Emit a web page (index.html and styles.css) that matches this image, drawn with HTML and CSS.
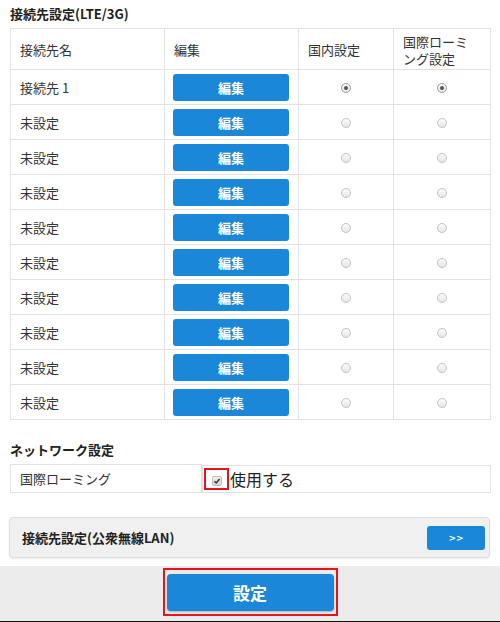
FILE: index.html
```html
<!DOCTYPE html>
<html lang="ja">
<head>
<meta charset="utf-8">
<link rel="stylesheet" href="styles.css">
</head>
<body>
<div class="page">
  <h2 class="title">接続先設定(LTE/3G)</h2>
  <table class="apn">
    <colgroup>
      <col class="c1"><col class="c2"><col class="c3"><col class="c4">
    </colgroup>
    <tr class="head">
      <td>接続先名</td><td>編集</td><td>国内設定</td><td>国際ローミング設定</td>
    </tr>
    <tr><td>接続先 1</td><td class="bc"><button class="edit">編集</button></td><td class="rc"><span class="radio on"></span></td><td class="rc"><span class="radio on"></span></td></tr>
    <tr><td>未設定</td><td class="bc"><button class="edit">編集</button></td><td class="rc"><span class="radio"></span></td><td class="rc"><span class="radio"></span></td></tr>
    <tr><td>未設定</td><td class="bc"><button class="edit">編集</button></td><td class="rc"><span class="radio"></span></td><td class="rc"><span class="radio"></span></td></tr>
    <tr><td>未設定</td><td class="bc"><button class="edit">編集</button></td><td class="rc"><span class="radio"></span></td><td class="rc"><span class="radio"></span></td></tr>
    <tr><td>未設定</td><td class="bc"><button class="edit">編集</button></td><td class="rc"><span class="radio"></span></td><td class="rc"><span class="radio"></span></td></tr>
    <tr><td>未設定</td><td class="bc"><button class="edit">編集</button></td><td class="rc"><span class="radio"></span></td><td class="rc"><span class="radio"></span></td></tr>
    <tr><td>未設定</td><td class="bc"><button class="edit">編集</button></td><td class="rc"><span class="radio"></span></td><td class="rc"><span class="radio"></span></td></tr>
    <tr><td>未設定</td><td class="bc"><button class="edit">編集</button></td><td class="rc"><span class="radio"></span></td><td class="rc"><span class="radio"></span></td></tr>
    <tr><td>未設定</td><td class="bc"><button class="edit">編集</button></td><td class="rc"><span class="radio"></span></td><td class="rc"><span class="radio"></span></td></tr>
    <tr><td>未設定</td><td class="bc"><button class="edit">編集</button></td><td class="rc"><span class="radio"></span></td><td class="rc"><span class="radio"></span></td></tr>
  </table>

  <h2 class="title net-title">ネットワーク設定</h2>
  <table class="net">
    <colgroup><col class="n1"><col class="n2"></colgroup>
    <tr>
      <td>国際ローミング</td>
      <td class="chk-cell"><span class="hl"><span class="check"><svg viewBox="0 0 10 10" width="8" height="8"><path d="M1.8 5.2 L4 7.4 L8.2 2.4" fill="none" stroke="#333" stroke-width="1.8"/></svg></span></span><span class="use">使用する</span></td>
    </tr>
  </table>

  <div class="panel">
    <span class="panel-label">接続先設定(公衆無線LAN)</span>
    <button class="go">&gt;&gt;</button>
  </div>
</div>
<div class="footer">
  <div class="hl-box"><button class="submit">設定</button></div>
</div>
</body>
</html>
```

FILE: styles.css
```css
html, body {
  margin: 0;
  padding: 0;
  background: #fff;
  font-family: "Noto Sans CJK JP", "Noto Sans", sans-serif;
  color: #333;
}
.page {
  padding: 0 10px;
}
.title {
  margin: 0;
  padding-top: 6px;
  height: 22px;
  font-size: 13px;
  line-height: 16px;
  font-weight: bold;
  color: #222;
}
.apn {
  border-collapse: collapse;
  table-layout: fixed;
  width: 480px;
  font-size: 13px;
}
.c1 { width: 154px; }
.c2 { width: 134px; }
.c3 { width: 95px; }
.c4 { width: 97px; }
.apn td {
  border: 1px solid #e2e2e2;
  height: 34px;
  padding: 0 0 0 9px;
  line-height: 17px;
  vertical-align: middle;
}
.apn .head td {
  height: 39px;
  padding-top: 1px;
  padding-right: 15px;
}
.apn td.bc {
  padding: 0 8px;
}
.apn td.rc {
  padding: 0;
  text-align: center;
}
.edit {
  display: block;
  width: 116px;
  height: 27px;
  margin: 0;
  border: none;
  border-radius: 3px;
  background: #1a87d9;
  color: #fff;
  font-family: inherit;
  font-size: 13px;
  font-weight: bold;
  padding: 0;
}
.radio {
  display: inline-block;
  width: 10px;
  height: 10px;
  box-sizing: border-box;
  border-radius: 50%;
  border: 1px solid #c4c4c4;
  background: linear-gradient(#fbfbfb, #e6e6e6);
  position: relative;
  vertical-align: middle;
  top: -1px;
}
.radio.on {
  border-color: #9a9a9a;
}
.radio.on::after {
  content: "";
  position: absolute;
  left: 2px;
  top: 2px;
  width: 4px;
  height: 4px;
  border-radius: 50%;
  background: #555;
}
.net-title {
  margin-top: 16px;
  padding-top: 6px;
  height: 22px;
}
.net {
  border-collapse: collapse;
  table-layout: fixed;
  width: 480px;
  font-size: 13px;
}
.n1 { width: 191px; }
.n2 { width: 289px; }
.net td {
  border: 1px solid #e2e2e2;
  height: 26px;
  padding: 0 0 0 9px;
  vertical-align: middle;
}
.net td.chk-cell {
  padding: 0;
}
.chk-cell {
  display: flex;
  align-items: center;
}
.hl {
  display: inline-flex;
  align-items: center;
  justify-content: center;
  box-sizing: border-box;
  width: 25px;
  height: 22px;
  margin-left: 1px;
  border: 2px solid #e8141b;
  padding-top: 4px;
}
.check {
  display: inline-flex;
  align-items: center;
  justify-content: center;
  width: 10px;
  height: 10px;
  box-sizing: border-box;
  border: 1px solid #bdbdbd;
  border-radius: 2px;
  background: linear-gradient(#f0f0f0, #d8d8d8);
}
.use {
  font-size: 16px;
  line-height: 20px;
  color: #222;
  margin-left: 1px;
}
.panel {
  margin-top: 24px;
  margin-left: -1px;
  display: flex;
  align-items: center;
  justify-content: space-between;
  height: 41px;
  box-sizing: border-box;
  padding: 0 4px 0 12px;
  background: #f0f0f0;
  border: 1px solid #dedede;
  border-radius: 4px;
  box-shadow: 0 1px 2px rgba(0,0,0,0.08);
}
.panel-label {
  font-size: 13px;
  font-weight: bold;
  color: #222;
}
.go {
  width: 58px;
  height: 24px;
  border: none;
  border-radius: 3px;
  background: #1a87d9;
  color: #fff;
  font-family: "DejaVu Sans", sans-serif;
  font-size: 9px;
  font-weight: bold;
  padding: 0;
}
.footer {
  margin-top: 8px;
  height: 53px;
  background: #ececec;
  border-bottom: 2px solid #111;
  display: flex;
  justify-content: center;
  padding-top: 2px;
  box-sizing: content-box;
}
.hl-box {
  box-sizing: border-box;
  width: 175px;
  height: 48px;
  border: 2px solid #e8141b;
  padding: 4px 2px 3px 2px;
}
.submit {
  display: block;
  width: 100%;
  height: 100%;
  border: none;
  border-radius: 4px;
  background: #1a87d9;
  color: #fff;
  font-family: inherit;
  font-size: 17px;
  font-weight: bold;
  padding: 0;
  box-shadow: 0 1px 2px rgba(0,0,0,0.25);
}
```
